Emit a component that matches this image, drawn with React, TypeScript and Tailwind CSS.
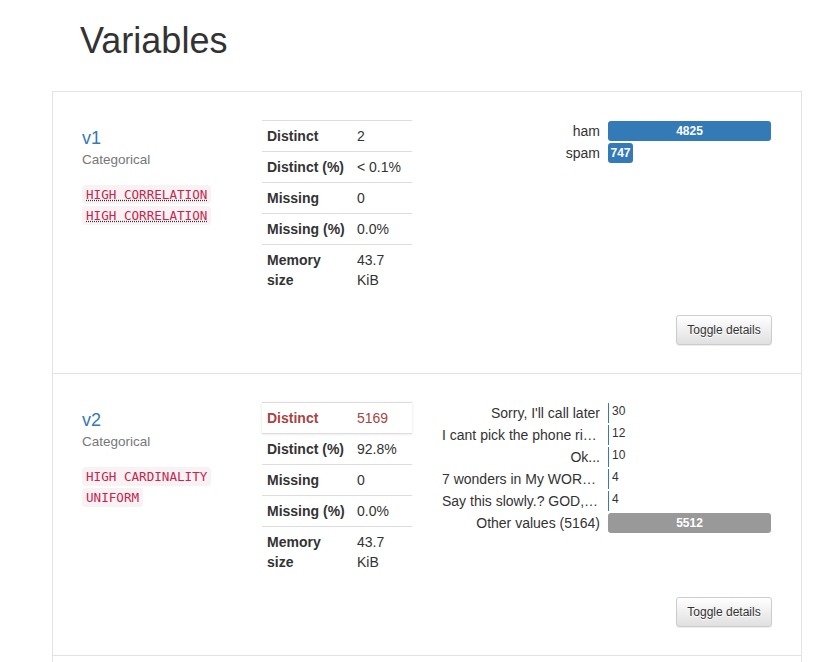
import React from 'react';

type Stat = { label: string; value: string; alert?: boolean };
type Freq = { label: string; count: number; other?: boolean };
type Variable = {
  name: string;
  kind: string;
  tags: string[];
  underline?: boolean;
  stats: Stat[];
  freqs: Freq[];
};

const BAR_WIDTH = 163;

const variables: Variable[] = [
  {
    name: 'v1',
    kind: 'Categorical',
    tags: ['HIGH CORRELATION', 'HIGH CORRELATION'],
    underline: true,
    stats: [
      { label: 'Distinct', value: '2' },
      { label: 'Distinct (%)', value: '< 0.1%' },
      { label: 'Missing', value: '0' },
      { label: 'Missing (%)', value: '0.0%' },
      { label: 'Memory size', value: '43.7 KiB' },
    ],
    freqs: [
      { label: 'ham', count: 4825 },
      { label: 'spam', count: 747 },
    ],
  },
  {
    name: 'v2',
    kind: 'Categorical',
    tags: ['HIGH CARDINALITY', 'UNIFORM'],
    stats: [
      { label: 'Distinct', value: '5169', alert: true },
      { label: 'Distinct (%)', value: '92.8%' },
      { label: 'Missing', value: '0' },
      { label: 'Missing (%)', value: '0.0%' },
      { label: 'Memory size', value: '43.7 KiB' },
    ],
    freqs: [
      { label: "Sorry, I'll call later", count: 30 },
      { label: 'I cant pick the phone ri\u2026', count: 12 },
      { label: 'Ok...', count: 10 },
      { label: '7 wonders in My WOR\u2026', count: 4 },
      { label: 'Say this slowly.? GOD,\u2026', count: 4 },
      { label: 'Other values (5164)', count: 5512, other: true },
    ],
  },
];

function FreqChart({ freqs }: { freqs: Freq[] }) {
  const max = Math.max(...freqs.map(f => f.count));
  return (
    <div className="flex flex-col">
      {freqs.map((f, i) => {
        const w = Math.max(1, Math.round((f.count / max) * BAR_WIDTH));
        const inside = w >= 20;
        // clipped labels start at the left edge, like an overflowing cell
        const clipped = f.label.endsWith('\u2026');
        return (
          <div key={i} className="flex h-[22px]">
            <div
              className={`w-[158px] truncate text-[14px] leading-[22px] text-[#333] ${clipped ? 'text-left' : 'text-right'}`}
            >
              {f.label}
            </div>
            <div className="ml-[8px] flex w-[163px] items-start">
              <div
                className={`mt-[1px] h-[20px] text-center text-[12px] font-bold leading-[20px] text-white ${f.other ? 'bg-[#999]' : 'bg-[#337ab7]'} ${inside ? 'rounded-[3px]' : ''}`}
                style={{ width: w }}
              >
                {inside ? f.count : null}
              </div>
              {!inside && (
                <span className="ml-[3px] mt-[1px] text-[12px] leading-[17px] text-[#333]">{f.count}</span>
              )}
            </div>
          </div>
        );
      })}
    </div>
  );
}

function VariableRow({ v }: { v: Variable }) {
  return (
    <div className="border-b border-[#e3e3e3] pb-[28px] pl-[29px] pr-[29px] pt-[28px]">
      <div className="flex h-[175px]">
        <div className="w-[180px]">
          <div className="mt-[8px] text-[18px] leading-[20px] text-[#337ab7]">{v.name}</div>
          <div className="mt-[2px] text-[13.5px] leading-[20px] text-[#777]">{v.kind}</div>
          <div className="mt-[14px] leading-[20px]">
            {v.tags.map((t, i) => (
              <React.Fragment key={i}>
                <code
                  className={`rounded-[4px] bg-[#f9f2f4] px-[4px] py-[2px] font-['DejaVu_Sans_Mono',monospace] text-[12.6px] text-[#c7254e] ${v.underline ? 'underline decoration-[#333] decoration-dotted' : ''}`}
                >
                  {t}
                </code>
                <br />
              </React.Fragment>
            ))}
          </div>
        </div>

        <div className="w-[150px] text-[14px] leading-[20px] text-[#333]">
          {v.stats.map((s, i) => (
            <div
              key={i}
              className={`flex border-t border-[#ddd] ${s.alert ? 'bg-white text-[#a94442] shadow-[0_1px_3px_rgba(0,0,0,0.12)]' : ''}`}
            >
              <div className="w-[90px] p-[5px] font-bold">{s.label}</div>
              <div className="w-[60px] p-[5px]">{s.value}</div>
            </div>
          ))}
        </div>

        <div className="ml-[30px] flex-1">
          <FreqChart freqs={v.freqs} />
        </div>
      </div>

      <div className="mt-[20px] flex justify-end">
        <button className="w-[96px] rounded-[3px] border border-[#ccc] bg-gradient-to-b from-white to-[#e0e0e0] py-[5px] text-center text-[12px] leading-[18px] text-[#333] shadow-[0_1px_1px_rgba(0,0,0,0.075)] [text-shadow:0_1px_0_#fff]">
          Toggle details
        </button>
      </div>
    </div>
  );
}

export default function App() {
  return (
    <div className="h-[662px] overflow-hidden bg-white font-['Liberation_Sans',Arial,sans-serif] text-[#333]">
      <div className="ml-[52px] w-[750px]">
        <h1 className="pl-[28px] pt-[21px] text-[36px] font-normal leading-[40px] text-[#333]">Variables</h1>
        <div className="mt-[30px] border border-b-0 border-[#e3e3e3]">
          {variables.map(v => (
            <VariableRow key={v.name} v={v} />
          ))}
          {/* next variable continues below the fold */}
          <div className="h-[20px]" />
        </div>
      </div>
    </div>
  );
}
